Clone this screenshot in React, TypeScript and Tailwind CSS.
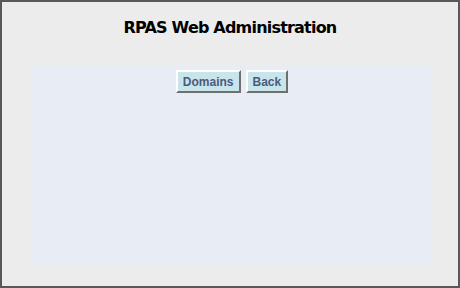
const App = () => {
  return (
    <div className="w-[460px] h-[288px] border-2 border-[#585858] bg-[#ececec] flex flex-col items-center font-[family-name:'DejaVu_Sans',sans-serif]">
      <h1 className="mt-[16px] text-[16px] leading-[19px] font-bold tracking-[-0.8px] text-black">
        RPAS Web Administration
      </h1>
      <div className="mt-[28px] ml-[30px] self-start w-[400px] h-[199px] bg-[#e8edf5] flex justify-center gap-[5px] pt-[5px]">
        {["Domains", "Back"].map((label) => (
          <button
            key={label}
            className="h-[23px] px-[5px] bg-[#c8e5ec] border-2 border-t-white border-l-white border-b-[#6f6f6f] border-r-[#6f6f6f] text-[12px] font-bold text-[#4b5a7e] font-[family-name:'Liberation_Sans',Arial,sans-serif]"
          >
            {label}
          </button>
        ))}
      </div>
    </div>
  )
}

export default App
